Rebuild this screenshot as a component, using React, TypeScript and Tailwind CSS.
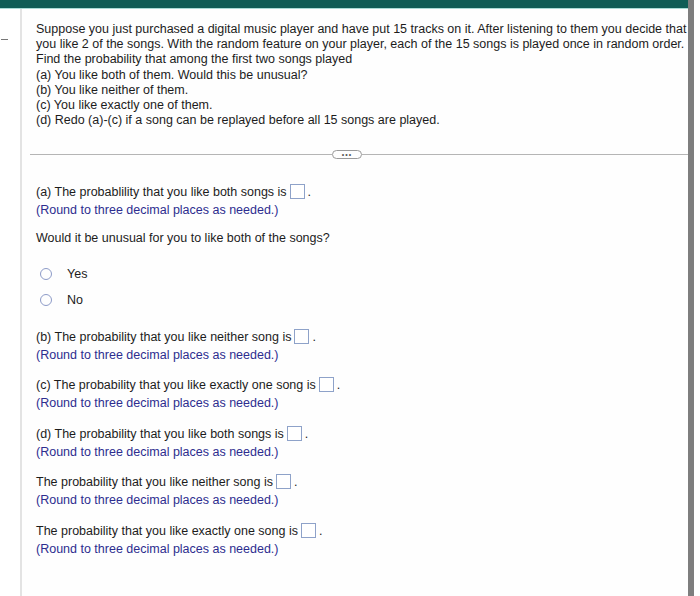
import React from 'react';

const AnswerBox: React.FC = () => (
  <span className="mx-[3px] inline-block h-[15px] w-[15px] border border-[#8ea2c9] bg-white align-[-3px]" />
);

const Part: React.FC<{ text: string; className?: string }> = ({ text, className }) => (
  <div className={className}>
    <div className="h-[18px] leading-[18px]">
      {text}
      <AnswerBox />.
    </div>
    <div className="leading-[18px] text-[#2d2d8f]">(Round to three decimal places as needed.)</div>
  </div>
);

const Radio: React.FC<{ label: string; className?: string }> = ({ label, className }) => (
  <div className={`flex items-center ${className ?? ''}`}>
    <span className="ml-[4px] h-[12px] w-[12px] rounded-full border-[1.5px] border-[#8d9bc8]" />
    <span className="ml-[15px]">{label}</span>
  </div>
);

const App: React.FC = () => {
  const questionLines = [
    'Suppose you just purchased a digital music player and have put 15 tracks on it. After listening to them you decide that',
    'you like 2 of the songs. With the random feature on your player, each of the 15 songs is played once in random order.',
    'Find the probability that among the first two songs played',
    '(a) You like both of them. Would this be unusual?',
    '(b) You like neither of them.',
    '(c) You like exactly one of them.',
    '(d) Redo (a)-(c) if a song can be replayed before all 15 songs are played.',
  ];

  return (
    <div className="flex h-[596px] w-[700px] overflow-hidden bg-white font-['Liberation_Sans',Arial,sans-serif] text-[12.5px] text-[#1c1c1c]">
      <div className="flex flex-1 flex-col">
        <div className="h-[8px] bg-[#0f5d56]" />
        <div className="h-px bg-[#a8dcd6]" />
        <div className="flex flex-1">
          {/* left gutter */}
          <div className="w-[20px] pt-[30px]">
            <div className="ml-[1px] h-px w-[7px] bg-[#777]" />
          </div>
          <div className="flex-1 border-l-2 border-[#e3e3e3] bg-[#fefefe]">
            <div className="pl-[14px] pt-[13px] leading-[15.2px]">
              {questionLines.map(line => (
                <div key={line} className="whitespace-nowrap">{line}</div>
              ))}
            </div>

            <div className="mt-[22px] ml-[8px] flex items-center">
              <div className="h-px w-[302px] bg-[#b5b5b5]" />
              <div className="flex h-[9px] w-[30px] items-center justify-center rounded-full border border-[#9a9a9a] text-[7px] leading-none tracking-[1px] text-[#555]">
                •••
              </div>
              <div className="h-px flex-1 bg-[#b5b5b5]" />
            </div>

            <div className="pl-[14px]">
              <Part className="mt-[24px]" text="(a) The probablility that you like both songs is" />
              <div className="mt-[10px] leading-[18px]">Would it be unusual for you to like both of the songs?</div>
              <Radio className="mt-[18px] h-[18px]" label="Yes" />
              <Radio className="mt-[8px] h-[18px]" label="No" />
              <Part className="mt-[19px]" text="(b) The probability that you like neither song is" />
              <Part className="mt-[12px]" text="(c) The probability that you like exactly one song is" />
              <Part className="mt-[13px]" text="(d) The probability that you like both songs is" />
              <Part className="mt-[12px]" text="The probability that you like neither song  is" />
              <Part className="mt-[13px]" text="The probability that you like exactly one song is" />
            </div>
          </div>
        </div>
      </div>
      <div className="w-[6px] bg-[#7e7e7e]" />
      <div className="w-[6px] bg-white" />
    </div>
  );
};

export default App;
